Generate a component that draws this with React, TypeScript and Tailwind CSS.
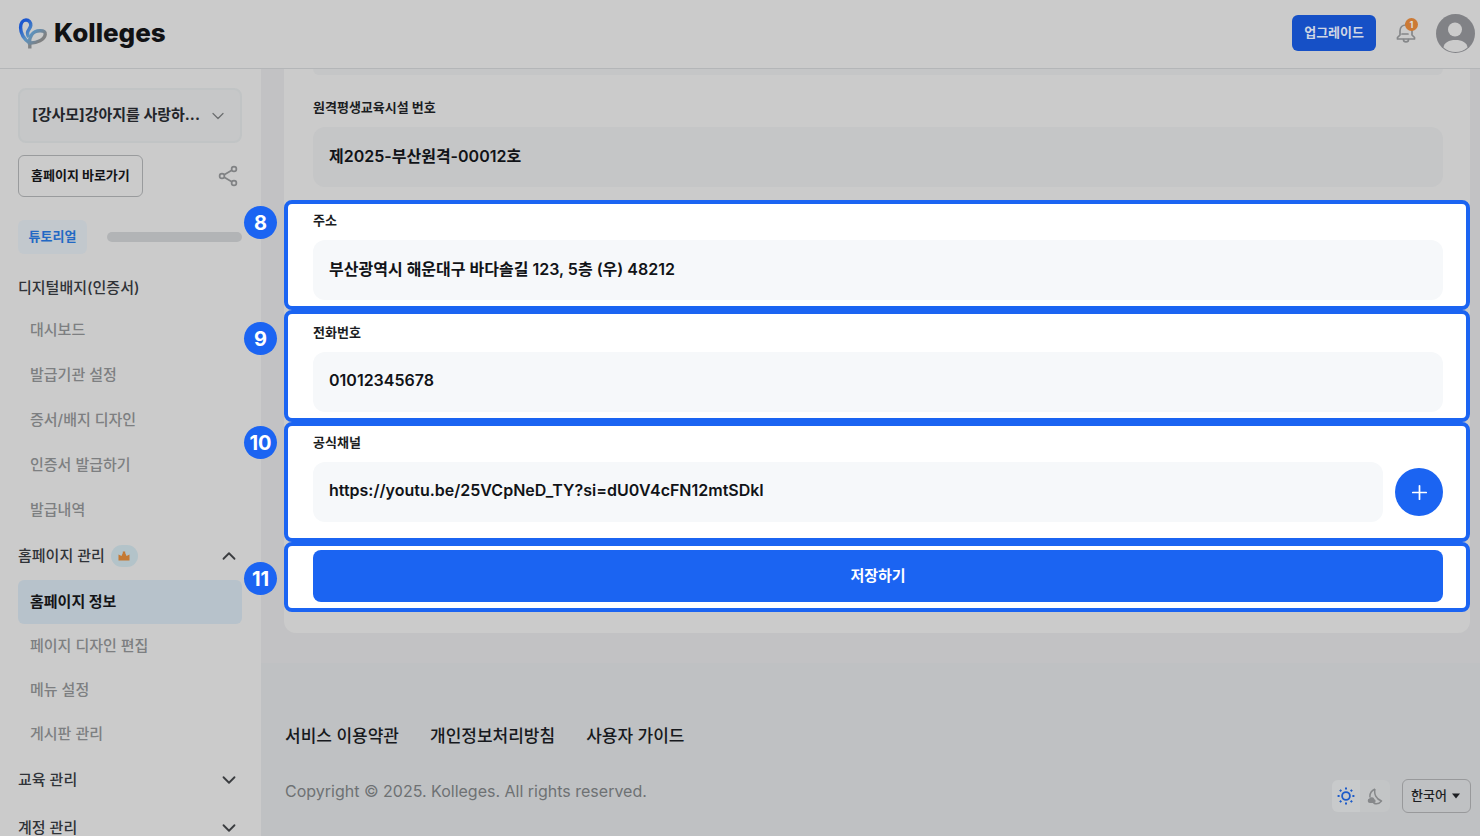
import { useState } from 'react';
import type { ReactNode } from 'react';
import { ChevronDown, ChevronUp, Plus } from 'lucide-react';

const badgeMenu = ['대시보드', '발급기관 설정', '증서/배지 디자인', '인증서 발급하기', '발급내역'];
const homepageMenu = ['홈페이지 정보', '페이지 디자인 편집', '메뉴 설정', '게시판 관리'];
const footerLinks = ['서비스 이용약관', '개인정보처리방침', '사용자 가이드'];

function LogoMark() {
  return (
    <svg width="30" height="32" viewBox="0 0 30 32" fill="none" strokeWidth="3.4" aria-hidden="true">
      <defs>
        <linearGradient id="leaf" x1="4" y1="4" x2="26" y2="24" gradientUnits="userSpaceOnUse">
          <stop offset="0.1" stopColor="#1b57cf" />
          <stop offset="0.5" stopColor="#5b92c0" />
          <stop offset="0.9" stopColor="#7f8081" />
        </linearGradient>
      </defs>
      <path d="M11.800 25V31.500" stroke="#7f8386" />
      <path
        d="M11.500 26C6 22 2.600 16.500 2.600 10.500C2.600 6 5 3 8 3C11 3 13 5.500 12.800 8.500C12.500 11.500 9.700 12.500 9.500 16C9.500 17.500 10 19 10.800 20"
        stroke="url(#leaf)"
      />
      <path d="M11.500 26C11.300 20 14 14 22 13.800C26 13.700 27.500 15 27.200 17.500C26.500 22.500 19 26.500 11.500 26Z" stroke="url(#leaf)" />
    </svg>
  );
}

function BellIcon() {
  return (
    <svg width="20" height="22" viewBox="0 0 20 22" fill="none" stroke="#858789" strokeWidth="1.7" strokeLinecap="round" strokeLinejoin="round" aria-hidden="true">
      <path d="M4 13V9C4 5.500 6.500 3 10 3S16 5.500 16 9V13L18.500 15.500V17H1.500V15.500ZM10 3V1.500" />
      <path d="M7.500 17.500C7.500 20.700 12.500 20.700 12.500 17.500M6 12H12" />
    </svg>
  );
}

function Avatar() {
  return (
    <svg width="39" height="39" viewBox="0 0 39 39" aria-hidden="true">
      <circle cx="19.500" cy="19.500" r="19.500" fill="#818286" />
      <circle cx="19" cy="15.500" r="7" fill="#cbcbcb" />
      <path d="M7.500 33.500C8 28.500 13 26 19.500 26S31 28.500 31.500 33.500C28 36.800 24 38 19.500 38S11 36.800 7.500 33.500Z" fill="#cbcbcb" />
    </svg>
  );
}

function ShareIcon() {
  return (
    <svg width="20" height="22" viewBox="0 0 20 22" fill="none" stroke="#808284" strokeWidth="1.700" aria-hidden="true">
      <circle cx="16" cy="4" r="2.400" />
      <circle cx="4" cy="11" r="2.400" />
      <circle cx="16" cy="18" r="2.400" />
      <path d="M6.200 9.700L13.800 5.300M6.200 12.300L13.800 16.700" />
    </svg>
  );
}

function CrownBadge() {
  return (
    <span className="flex h-[22px] w-[27px] items-center justify-center rounded-full bg-[#b3c3c9]">
      <svg width="12" height="10" viewBox="0 0 12 10" fill="#c47933" aria-hidden="true">
        <path d="M0.500 3.500L3.500 5L4.800 2V0.500H7.200V2L8.500 5L11.500 3.500V9.500H0.500Z" />
      </svg>
    </span>
  );
}

function SunIcon() {
  return (
    <svg width="18" height="18" viewBox="0 0 18 18" fill="none" stroke="#1c5bc9" aria-hidden="true">
      <circle cx="9" cy="9" r="3.900" strokeWidth="1.800" />
      <path
        d="M9 0.600V2.600M9 15.400V17.400M0.600 9H2.600M15.400 9H17.400M2.900 2.900L4.300 4.300M13.700 13.700L15.100 15.100M2.900 15.100L4.300 13.700M13.700 4.300L15.100 2.900"
        strokeWidth="2"
      />
    </svg>
  );
}

function MoonIcon() {
  return (
    <svg width="16" height="17" viewBox="0 0 16 17" fill="none" aria-hidden="true">
      <path d="M8 1C4 3 2.500 6 3 9.500M8 1C6.800 6 9 11 14.500 13C12 16 9 16.300 6.500 15" stroke="#86888a" strokeWidth="1.500" strokeLinejoin="round" />
      <path d="M2.800 15A2.300 2.300 0 0 1 2.400 10.500A2.800 2.800 0 0 1 7.400 11.200A2 2 0 0 1 7 15Z" fill="#86888a" />
    </svg>
  );
}

function StepNumber({ value, className }: { value: number; className: string }) {
  return (
    <span className={`absolute -left-11 flex size-[33px] items-center justify-center rounded-full bg-[#1b64f2] text-xl font-bold text-white ${className}`}>
      {value}
    </span>
  );
}

interface FieldProps {
  id: string;
  label: string;
  value: string;
  dimmed?: boolean;
  action?: ReactNode;
}

function Field({ id, label, value, dimmed, action }: FieldProps) {
  return (
    <div className="flex flex-col gap-2">
      <label htmlFor={id} className="text-[13px] leading-6 font-bold text-[#1b1d22]">
        {label}
      </label>
      <div className="flex items-center gap-3">
        <input
          id={id}
          type="text"
          defaultValue={value}
          className={`h-[60px] min-w-0 flex-1 rounded-xl px-4 pb-1 text-base font-semibold text-[#111317] outline-none ${dimmed ? 'bg-[#c5c6c7]' : 'bg-[#f6f8fa]'}`}
        />
        {action}
      </div>
    </div>
  );
}

function Header() {
  return (
    <header className="flex h-[69px] shrink-0 items-center justify-between border-b border-[#b4b6b8] bg-[#cbcbcb] pr-[5px] pb-0.5 pl-[18px]">
      <a href="#" className="flex items-center gap-1.5">
        <LogoMark />
        <span className="text-[26px] leading-8 font-extrabold text-[#111214]">Kolleges</span>
      </a>
      <div className="flex items-center">
        <button type="button" className="h-9 rounded-md bg-[#1650c6] px-3 text-[13px] font-bold text-[#cfd6e4]">
          업그레이드
        </button>
        <button type="button" aria-label="알림" className="relative ml-5">
          <BellIcon />
          <span className="absolute -top-1 left-[9px] flex size-[13px] items-center justify-center rounded-full bg-[#cc7a35] text-[9px] font-bold text-[#dddddd]">
            1
          </span>
        </button>
        <button type="button" aria-label="내 계정" className="ml-5">
          <Avatar />
        </button>
      </div>
    </header>
  );
}

function MenuSection({ title, open, badge }: { title: string; open: boolean; badge?: ReactNode }) {
  return (
    <button type="button" aria-expanded={open} className="flex h-12 w-full shrink-0 items-center gap-1.5 pr-0.5 text-[15px] font-medium text-[#303338]">
      {title}
      {badge}
      <span className="ml-auto text-[#3b3d40]">{open ? <ChevronUp size={22} /> : <ChevronDown size={22} />}</span>
    </button>
  );
}

function Sidebar() {
  return (
    <aside className="flex w-[261px] shrink-0 flex-col overflow-hidden bg-[#cbcbcb] pt-[19px] pr-[19px] pl-[18px]">
      <button type="button" className="flex h-[55px] shrink-0 items-center justify-between rounded-lg border-2 border-[#c1c4c5] bg-[#c6c7c8] pr-3 pl-3 text-[15px] font-bold text-[#23252a]">
        [강사모]강아지를 사랑하...
        <ChevronDown size={20} strokeWidth={1.5} className="text-[#6c6e70]" />
      </button>

      <div className="mt-3 flex items-center justify-between pr-1">
        <a href="#" className="flex h-[42px] items-center rounded-md border border-[#999b9d] px-3 text-[13px] font-bold text-[#131417]">
          홈페이지 바로가기
        </a>
        <button type="button" aria-label="공유">
          <ShareIcon />
        </button>
      </div>

      <div className="mt-[23px] flex items-center gap-5">
        <span className="flex h-[34px] w-[69px] shrink-0 items-center justify-center rounded-md bg-[#c2c8cd] text-[13px] font-bold text-[#2268c4]">
          튜토리얼
        </span>
        <div className="h-[10px] flex-1 rounded-full bg-[#b2b4b6]" />
      </div>

      <h2 className="mt-[14px] h-10 shrink-0 text-[15px] leading-10 font-medium text-[#303338]">디지털배지(인증서)</h2>
      <nav className="flex flex-col gap-px">
        {badgeMenu.map((item) => (
          <a key={item} href="#" className="flex h-11 shrink-0 items-center px-3 text-[15px] font-medium text-[#7d7f81]">
            {item}
          </a>
        ))}
      </nav>

      <MenuSection title="홈페이지 관리" open badge={<CrownBadge />} />
      <nav className="flex flex-col">
        {homepageMenu.map((item, index) => (
          <a
            key={item}
            href="#"
            className={`flex h-11 shrink-0 items-center rounded-md px-3 text-[15px] ${index === 0 ? 'bg-[#b7c2cb] font-bold text-[#131417]' : 'font-medium text-[#7d7f81]'}`}
          >
            {item}
          </a>
        ))}
      </nav>
      <MenuSection title="교육 관리" open={false} />
      <MenuSection title="계정 관리" open={false} />
    </aside>
  );
}

function HomepageForm() {
  return (
    <form className="rounded-b-xl bg-[#cbcbcb] pb-[21px]">
      {/* Lower edge of the field scrolled under the header */}
      <div className="mr-[27px] ml-[29px] h-1.5 rounded-b-xl bg-[#c5c6c7]" />
      <div className="mt-5 mb-[13px] pr-[27px] pl-[29px]">
        <Field id="facility" label="원격평생교육시설 번호" value="제2025-부산원격-00012호" dimmed />
      </div>

      <section className="relative rounded-lg border-4 border-[#1b64f2] bg-white pt-1 pr-[23px] pb-1.5 pl-[25px]">
        <StepNumber value={8} className="top-0.5" />
        <Field id="address" label="주소" value="부산광역시 해운대구 바다솔길 123, 5층 (우) 48212" />
      </section>

      <section className="relative rounded-lg border-4 border-[#1b64f2] bg-white pt-1.5 pr-[23px] pb-1.5 pl-[25px]">
        <StepNumber value={9} className="top-2" />
        <Field id="phone" label="전화번호" value="01012345678" />
      </section>

      <section className="relative rounded-lg border-4 border-[#1b64f2] bg-white pt-1 pr-[23px] pb-4 pl-[25px]">
        <StepNumber value={10} className="top-0" />
        <Field
          id="channel"
          label="공식채널"
          value="https://youtu.be/25VCpNeD_TY?si=dU0V4cFN12mtSDkI"
          action={
            <button type="button" aria-label="채널 추가" className="flex size-12 items-center justify-center rounded-full bg-[#1b64f2] text-white">
              <Plus size={23} strokeWidth={1.8} />
            </button>
          }
        />
      </section>

      <section className="relative rounded-lg border-4 border-[#1b64f2] bg-white pt-1 pr-[23px] pb-1.5 pl-[25px]">
        <StepNumber value={11} className="top-4" />
        <button type="button" className="h-[52px] w-full rounded-lg bg-[#1b64f2] text-[15px] font-bold text-white">
          저장하기
        </button>
      </section>
    </form>
  );
}

function Footer() {
  const [theme, setTheme] = useState('light');

  return (
    <footer className="mt-[30px] flex-1 bg-[#bfc1c3] pt-[61px] pr-[9px] pb-6 pl-6">
      <nav className="flex gap-[31px]">
        {footerLinks.map((link) => (
          <a key={link} href="#" className="text-[17px] leading-6 font-medium text-[#17191d]">
            {link}
          </a>
        ))}
      </nav>
      <div className="mt-[31px] flex items-start justify-between">
        <p className="text-base leading-6 text-[#6e7173]">Copyright © 2025. Kolleges. All rights reserved.</p>
        <div className="flex items-center gap-3">
          <div className="flex h-8 overflow-hidden rounded-md bg-[#c3c5c6]">
            <button type="button" aria-label="라이트 모드" aria-pressed={theme === 'light'} onClick={() => setTheme('light')} className="flex w-7 items-center justify-center bg-[#c8cacb]">
              <SunIcon />
            </button>
            <button type="button" aria-label="다크 모드" aria-pressed={theme === 'dark'} onClick={() => setTheme('dark')} className="flex w-[30px] items-center justify-center">
              <MoonIcon />
            </button>
          </div>
          <div className="relative">
            <select aria-label="언어" className="h-[34px] w-[69px] appearance-none rounded-md border border-[#98999b] pl-2 text-[13px] font-medium text-[#1d1f23]">
              <option>한국어</option>
            </select>
            <svg width="8" height="6" viewBox="0 0 8 6" fill="#1d1f23" className="pointer-events-none absolute top-[14px] right-[11px]" aria-hidden="true">
              <path d="M0 0.500H8L4 5.500Z" />
            </svg>
          </div>
        </div>
      </div>
    </footer>
  );
}

export default function App() {
  return (
    <div className="flex h-screen flex-col overflow-hidden font-['Inter','Noto_Sans_CJK_KR',sans-serif]">
      <Header />
      <div className="flex min-h-0 flex-1">
        <Sidebar />
        <main className="flex min-w-0 flex-1 flex-col bg-[#c2c2c4]">
          <div className="pr-[10px] pl-[23px]">
            <HomepageForm />
          </div>
          <Footer />
        </main>
      </div>
    </div>
  );
}
